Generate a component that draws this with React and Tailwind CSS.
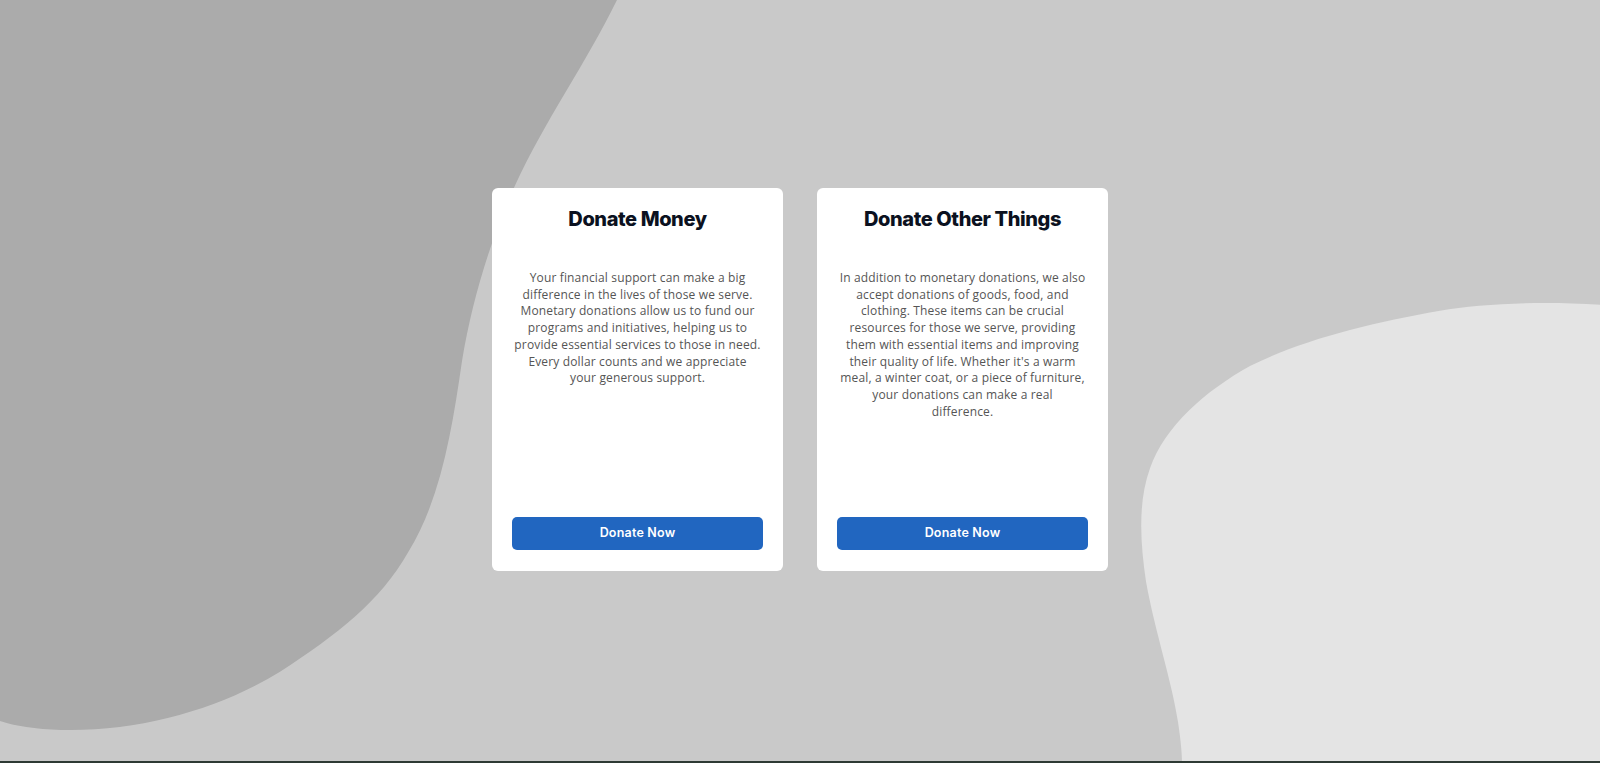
import React from "react";

const cards = [
  {
    title: "Donate Money",
    lines: [
      "Your financial support can make a big",
      "difference in the lives of those we serve.",
      "Monetary donations allow us to fund our",
      "programs and initiatives, helping us to",
      "provide essential services to those in need.",
      "Every dollar counts and we appreciate",
      "your generous support.",
    ],
  },
  {
    title: "Donate Other Things",
    lines: [
      "In addition to monetary donations, we also",
      "accept donations of goods, food, and",
      "clothing. These items can be crucial",
      "resources for those we serve, providing",
      "them with essential items and improving",
      "their quality of life. Whether it's a warm",
      "meal, a winter coat, or a piece of furniture,",
      "your donations can make a real",
      "difference.",
    ],
  },
];

function Blobs() {
  return (
    <svg
      className="absolute inset-0 w-full h-full"
      viewBox="0 0 1600 761"
      preserveAspectRatio="none"
    >
      <path
        d="M0 0 L617 0 C585 65 545 120 515 185 C490 240 472 300 462 360 C452 430 440 500 408 551 C380 600 337 633 280 670 C220 707 140 730 61 728 C35 727 15 724 0 719 Z"
        fill="#ababab"
      />
      <path
        d="M1600 304 C1540 300 1480 303 1440 310 C1370 322 1300 340 1250 365 C1205 390 1165 425 1150 467 C1138 500 1140 540 1146 580 C1155 630 1172 680 1178 720 C1181 740 1182 752 1182 761 L1600 761 Z"
        fill="#e4e4e4"
      />
    </svg>
  );
}

export default function App() {
  return (
    <div
      className="relative w-full h-[763px] bg-[#c9c9c9] overflow-hidden flex flex-col"
      style={{ fontFamily: "Inter, 'Noto Sans', sans-serif" }}
    >
      <Blobs />
      <div className="relative flex-1 flex items-center justify-center gap-[34px] pb-[2px]">
        {cards.map((c) => (
          <div
            key={c.title}
            className="w-[291px] h-[383px] bg-white rounded-md px-5 pt-5 pb-[21px] flex flex-col items-center"
          >
            <h2 className="text-[20px] leading-7 font-extrabold text-[#0b1120] tracking-[-0.4px] -mt-[3px]">
              {c.title}
            </h2>
            <p className="mt-[37px] font-['Open_Sans',sans-serif] text-[12px] leading-[16.7px] text-[#555] text-center whitespace-nowrap tracking-[0.15px]">
              {c.lines.map((l, i) => (
                <React.Fragment key={i}>
                  {l}
                  {i < c.lines.length - 1 && <br />}
                </React.Fragment>
              ))}
            </p>
            <button className="mt-auto w-full h-[33px] rounded-[5px] bg-[#2166c0] text-white text-[12.5px] font-semibold tracking-[0.2px]">
              Donate Now
            </button>
          </div>
        ))}
      </div>
      <div className="relative h-[2px] bg-[#2e3a34]" />
    </div>
  );
}
